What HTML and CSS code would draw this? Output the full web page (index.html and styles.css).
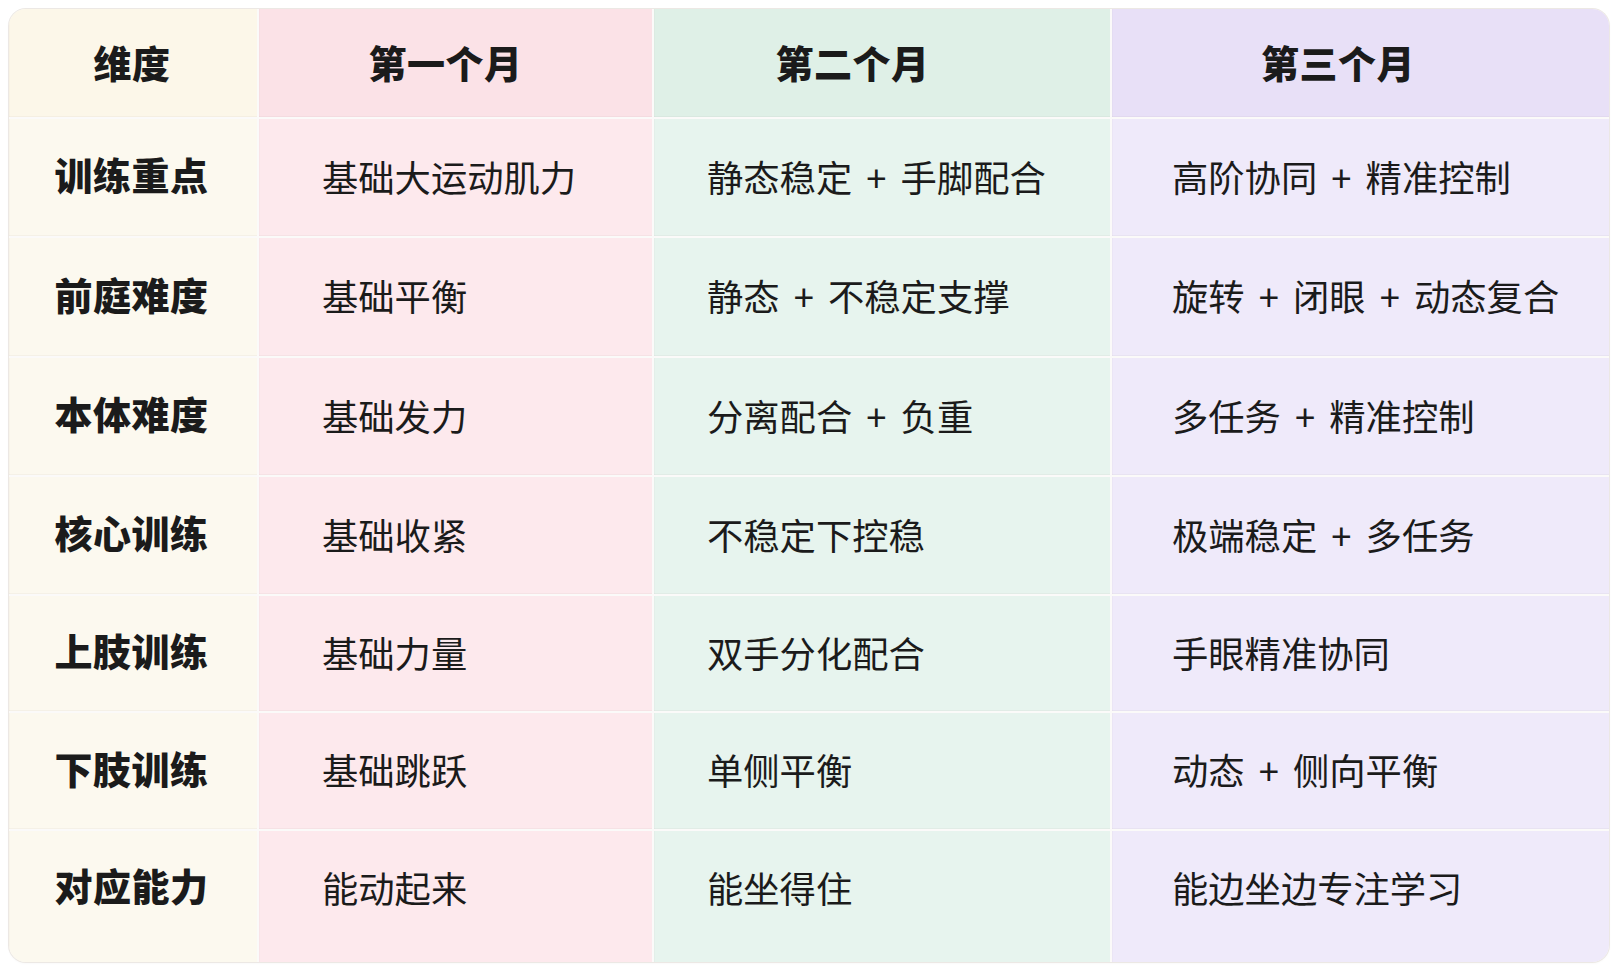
FILE: index.html
```html
<!DOCTYPE html>
<html lang="zh-CN">
<head>
<meta charset="utf-8">
<title>三个月训练计划</title>
<link rel="stylesheet" href="styles.css">
</head>
<body>
<div class="plan">
  <div class="cell head c1">维度</div>
  <div class="cell head c2">第一个月</div>
  <div class="cell head c3">第二个月</div>
  <div class="cell head c4">第三个月</div>

  <div class="cell label c1">训练重点</div>
  <div class="cell body c2">基础大运动肌力</div>
  <div class="cell body c3">静态稳定 + 手脚配合</div>
  <div class="cell body c4">高阶协同 + 精准控制</div>

  <div class="cell label c1">前庭难度</div>
  <div class="cell body c2">基础平衡</div>
  <div class="cell body c3">静态 + 不稳定支撑</div>
  <div class="cell body c4">旋转 + 闭眼 + 动态复合</div>

  <div class="cell label c1">本体难度</div>
  <div class="cell body c2">基础发力</div>
  <div class="cell body c3">分离配合 + 负重</div>
  <div class="cell body c4">多任务 + 精准控制</div>

  <div class="cell label c1">核心训练</div>
  <div class="cell body c2">基础收紧</div>
  <div class="cell body c3">不稳定下控稳</div>
  <div class="cell body c4">极端稳定 + 多任务</div>

  <div class="cell label c1">上肢训练</div>
  <div class="cell body c2">基础力量</div>
  <div class="cell body c3">双手分化配合</div>
  <div class="cell body c4">手眼精准协同</div>

  <div class="cell label c1">下肢训练</div>
  <div class="cell body c2">基础跳跃</div>
  <div class="cell body c3">单侧平衡</div>
  <div class="cell body c4">动态 + 侧向平衡</div>

  <div class="cell label c1 last">对应能力</div>
  <div class="cell body c2 last">能动起来</div>
  <div class="cell body c3 last">能坐得住</div>
  <div class="cell body c4 last">能边坐边专注学习</div>
</div>
</body>
</html>
```

FILE: styles.css
```css
html, body {
  margin: 0;
  padding: 0;
  background: #ffffff;
}

body {
  padding: 9px 10px 10px 9px;
  font-family: "Noto Sans CJK SC", "Noto Sans", sans-serif;
  color: #1b1b1b;
}

.plan {
  width: 1600px;
  height: 953px;
  display: grid;
  grid-template-columns: 248px 393px 456px 497px;
  grid-template-rows: 108px 117px 118px 117px 117px 115px 116px 1fr;
  column-gap: 2px;
  row-gap: 2px;
  background: #fbfaf9;
  border-radius: 17px;
  overflow: hidden;
  box-shadow: 0 0 0 1px #ece8e4, 0 1px 3px rgba(0, 0, 0, 0.05);
}

.cell {
  display: flex;
  align-items: center;
  padding-bottom: 4px;
  box-sizing: border-box;
  box-shadow: inset 0 -1px 0 rgba(120, 100, 100, 0.05), inset 1px 0 0 rgba(120, 100, 100, 0.03);
}

.cell.last {
  box-shadow: inset 1px 0 0 rgba(120, 100, 100, 0.03);
}

.head {
  justify-content: center;
  font-size: 38px;
  font-weight: 900;
  letter-spacing: 0.5px;
}

.label {
  justify-content: center;
  font-size: 38px;
  font-weight: 900;
  letter-spacing: 0.5px;
  padding-bottom: 8px;
  padding-right: 3px;
}

.body {
  font-size: 36.3px;
  font-weight: 400;
  word-spacing: 6px;
}

.body.last {
  padding-bottom: 20px;
}

.label.last {
  padding-bottom: 24px;
}

.c1 { background: #fcf9ef; }
.c2 { background: #fde9ed; }
.c3 { background: #e7f4ee; }
.c4 { background: #efeafa; }

.head.c1 { background: #fcf7e9; padding-right: 2px; }
.head.c2 { background: #fbe2e7; padding-right: 20px; }
.head.c3 { background: #dff0e7; padding-right: 59px; }
.head.c4 { background: #e8e0f7; padding-right: 45px; }

.body.c2 { padding-left: 63px; }
.body.c3 { padding-left: 53px; }
.body.c4 { padding-left: 60px; }
```
